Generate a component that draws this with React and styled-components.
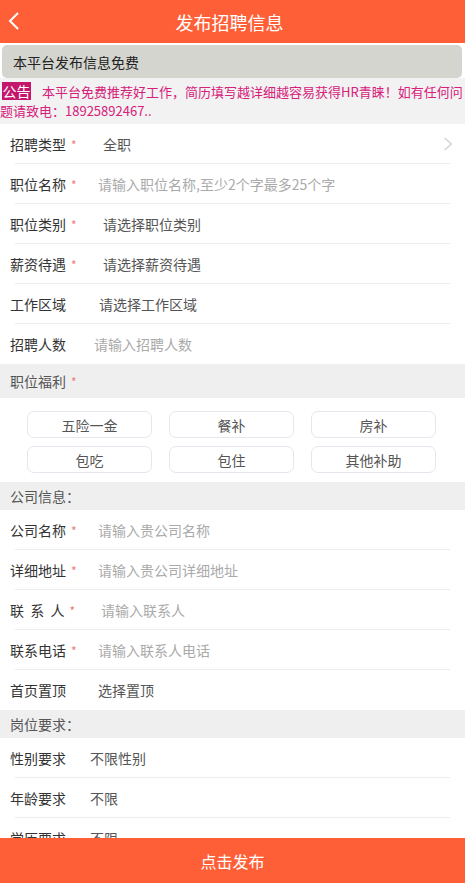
import React from 'react';
import styled, { createGlobalStyle } from 'styled-components';

const GlobalStyle = createGlobalStyle`
    html, body {
        margin: 0;
        padding: 0;
        background: #ffffff;
        font-family: "Noto Sans CJK SC", "Noto Sans", sans-serif;
    }
    * {
        box-sizing: border-box;
    }
`

// x = where the value text starts on the page
const basicRows = [
    { label: '招聘类型', required: true, value: '全职', filled: true, x: 103, arrow: true },
    { label: '职位名称', required: true, value: '请输入职位名称,至少2个字最多25个字', x: 98 },
    { label: '职位类别', required: true, value: '请选择职位类别', filled: true, x: 103 },
    { label: '薪资待遇', required: true, value: '请选择薪资待遇', filled: true, x: 103 },
    { label: '工作区域', value: '请选择工作区域', filled: true, x: 99 },
    { label: '招聘人数', value: '请输入招聘人数', x: 94 },
]

const companyRows = [
    { label: '公司名称', required: true, value: '请输入贵公司名称', x: 98 },
    { label: '详细地址', required: true, value: '请输入贵公司详细地址', x: 98 },
    { label: '联  系  人', required: true, value: '请输入联系人', x: 101 },
    { label: '联系电话', required: true, value: '请输入联系人电话', x: 98 },
    { label: '首页置顶', value: '选择置顶', filled: true, x: 98 },
]

const requireRows = [
    { label: '性别要求', value: '不限性别', filled: true, x: 90 },
    { label: '年龄要求', value: '不限', filled: true, x: 90 },
    { label: '学历要求', value: '不限', filled: true, x: 90 },
]

const benefits = ['五险一金', '餐补', '房补', '包吃', '包住', '其他补助']

function FormRow({ row }) {
    return (
        <Row>
            <Label>
                {row.label}
                {row.required && <Star>*</Star>}
            </Label>
            <Value $filled={row.filled} $x={row.x}>{row.value}</Value>
            {row.arrow && (
                <Arrow viewBox="0 0 10 14">
                    <path d="M1.5 1 L8.5 7 L1.5 13" fill="none" stroke="#cfcfcf" strokeWidth="1.2" />
                </Arrow>
            )}
        </Row>
    )
}

function App() {
    return (
        <Page>
            <GlobalStyle />
            <Header>
                <Back viewBox="0 0 14 20">
                    <path d="M11 2 L3 10 L11 18" fill="none" stroke="#fff" strokeWidth="2" />
                </Back>
                <Title>发布招聘信息</Title>
            </Header>

            <Banner>本平台发布信息免费</Banner>

            <Notice>
                <Tag>公告</Tag>
                本平台免费推荐好工作，简历填写越详细越容易获得HR青睐！如有任何问题请致电：18925892467..
            </Notice>

            <Group>
                {basicRows.map((r) => <FormRow key={r.label} row={r} />)}
            </Group>

            <Section $tall>职位福利<Star>*</Star></Section>
            <Benefits>
                {benefits.map((b) => <Benefit key={b}>{b}</Benefit>)}
            </Benefits>

            <Section>公司信息：</Section>
            <Group>
                {companyRows.map((r) => <FormRow key={r.label} row={r} />)}
            </Group>

            <Section>岗位要求：</Section>
            <Group>
                {requireRows.map((r) => <FormRow key={r.label} row={r} />)}
            </Group>

            <Submit>点击发布</Submit>
        </Page>
    )
}

export default App

const Page = styled.div`
    width: 465px;
    height: 883px;
    overflow: hidden;
    position: relative;
    background: #fff;
`

const Header = styled.div`
    height: 43px;
    background: #ff5f37;
    display: flex;
    align-items: center;
    justify-content: center;
    position: relative;
`

const Back = styled.svg`
    position: absolute;
    left: 7px;
    top: 11px;
    width: 14px;
    height: 20px;
`

const Title = styled.div`
    color: #fff;
    font-size: 18px;
    margin-left: -6px;
`

const Banner = styled.div`
    margin: 2px 3px 0 2px;
    height: 33px;
    background: #d5d5d0;
    border-radius: 5px;
    display: flex;
    align-items: center;
    padding-left: 11px;
    font-size: 14px;
    color: #222;
`

const Notice = styled.div`
    background: #f2f2f2;
    color: #d6207a;
    font-size: 13px;
    line-height: 19px;
    padding: 4px 0 4px 0;
    word-break: break-all;
`

const Tag = styled.span`
    display: inline-block;
    background: #c3166c;
    color: #fff;
    padding: 0 0.5px;
    margin: 0 11px 0 2px;
    font-size: 14px;
    line-height: 18px;
`

const Group = styled.div`
    background: #fff;
`

const Row = styled.div`
    height: 40px;
    margin-left: 15px;
    margin-right: 15px;
    display: flex;
    align-items: center;
    border-bottom: 1px solid #ececec;
    position: relative;
    font-size: 14px;

    &:last-child {
        border-bottom: none;
    }
`

const Label = styled.div`
    margin-left: -5px;
    width: 70px;
    flex-shrink: 0;
    color: #333;
    white-space: pre;
`

const Star = styled.span`
    color: #ec7b7b;
    font-size: 12px;
    margin-left: 5px;
`

const Value = styled.div`
    margin-left: ${(p) => p.$x - 80}px;
    color: ${(p) => (p.$filled ? '#555' : '#aaa')};
    white-space: nowrap;
`

const Arrow = styled.svg`
    position: absolute;
    right: -3px;
    top: 13px;
    width: 10px;
    height: 14px;
`

const Section = styled.div`
    height: ${(p) => (p.$tall ? 34 : 28)}px;
    background: #efefef;
    display: flex;
    align-items: center;
    padding-left: 10px;
    font-size: 14px;
    color: #555;
`

const Benefits = styled.div`
    display: grid;
    grid-template-columns: repeat(3, 125px);
    column-gap: 17px;
    row-gap: 8px;
    padding: 13px 0 9px 27px;
    background: #fff;
`

const Benefit = styled.div`
    height: 27px;
    border: 1px solid #e6e6ee;
    border-radius: 7px;
    display: flex;
    align-items: center;
    justify-content: center;
    font-size: 14px;
    color: #555;
`

const Submit = styled.div`
    position: absolute;
    left: 0;
    right: 0;
    bottom: 0;
    height: 45px;
    background: #ff5f37;
    color: #fff;
    font-size: 16px;
    display: flex;
    align-items: center;
    justify-content: center;
`
